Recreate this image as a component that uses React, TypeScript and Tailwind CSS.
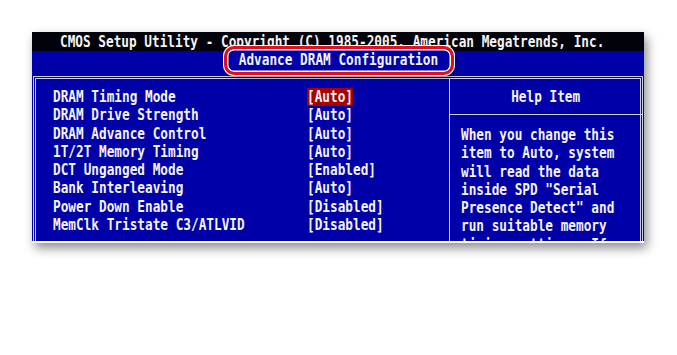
import React from "react";

const rows: [string, string][] = [
  ["DRAM Timing Mode", "[Auto]"],
  ["DRAM Drive Strength", "[Auto]"],
  ["DRAM Advance Control", "[Auto]"],
  ["1T/2T Memory Timing", "[Auto]"],
  ["DCT Unganged Mode", "[Enabled]"],
  ["Bank Interleaving", "[Auto]"],
  ["Power Down Enable", "[Disabled]"],
  ["MemClk Tristate C3/ATLVID", "[Disabled]"],
];

const help = [
  "When you change this",
  "item to Auto, system",
  "will read the data",
  'inside SPD "Serial',
  'Presence Detect" and',
  "run suitable memory",
  "timing settings. If",
];

export default function App() {
  return (
    <div className="relative w-[677px] h-[355px] bg-white pt-[32px] pl-[32px] font-['DejaVu_Sans_Mono',monospace] font-bold text-[15px] text-[#f4f4f4]">
      <div className="w-[612px] h-[211px] overflow-hidden bg-[#0000a8] shadow-[3px_5px_10px_rgba(0,0,0,0.45)] flex flex-col border-b-2 border-white">
        <div className="h-[19px] shrink-0 bg-[#02020a] leading-[20px] pl-[28px] whitespace-pre">
          <span className="inline-block origin-left [transform:scaleX(0.849)]">
            CMOS Setup Utility - Copyright (C) 1985-2005, American Megatrends, Inc.
          </span>
        </div>
        <div className="h-[25px] shrink-0 flex justify-center">
          <span className="relative z-10 inline-block leading-[18.2px] [transform:scaleX(0.849)] whitespace-pre">
            Advance DRAM Configuration
          </span>
        </div>
        <div className="mx-px grow border border-b-0 border-[#d0d0f4] p-px pb-0">
          <div className="h-full border border-b-0 border-[#d0d0f4] flex">
            <div className="w-[413px] shrink-0 pl-[17px] pt-[9px] flex leading-[18.3px] whitespace-pre">
              <div className="w-[254px] shrink-0">
                <div className="origin-left [transform:scaleX(0.849)]">
                  {rows.map(([l]) => (
                    <div key={l} className="h-[18.3px]">{l}</div>
                  ))}
                </div>
              </div>
              <div className="origin-left [transform:scaleX(0.849)]">
                {rows.map(([l, v], i) => (
                  <div key={l} className="h-[18.3px]">
                    <span className={i === 0 ? "inline-block h-[18.3px] bg-[#a80000]" : "inline-block h-[18.3px]"}>{v}</span>
                  </div>
                ))}
              </div>
            </div>
            <div className="grow border-l border-[#d0d0f4] flex flex-col">
              <div className="h-[36px] shrink-0 border-b border-[#d0d0f4] flex items-center justify-center pt-px">
                <span className="inline-block [transform:scaleX(0.849)] whitespace-pre">Help Item</span>
              </div>
              <div className="pl-[11px] pt-[11px] leading-[18.3px] whitespace-pre">
                <div className="origin-left [transform:scaleX(0.849)]">
                  {help.map((h) => (
                    <div key={h} className="h-[18.3px]">{h}</div>
                  ))}
                </div>
              </div>
            </div>
          </div>
        </div>
      </div>
      <div className="absolute left-[224px] top-[46px] w-[230px] h-[29px] rounded-[10px] border-[3px] border-[#e0101a] bg-[#0000a8] shadow-[0_0_0_1px_#ffffff,inset_0_0_0_1.5px_#ffffff,2px_3px_5px_rgba(0,0,0,0.35)]" />
    </div>
  );
}
